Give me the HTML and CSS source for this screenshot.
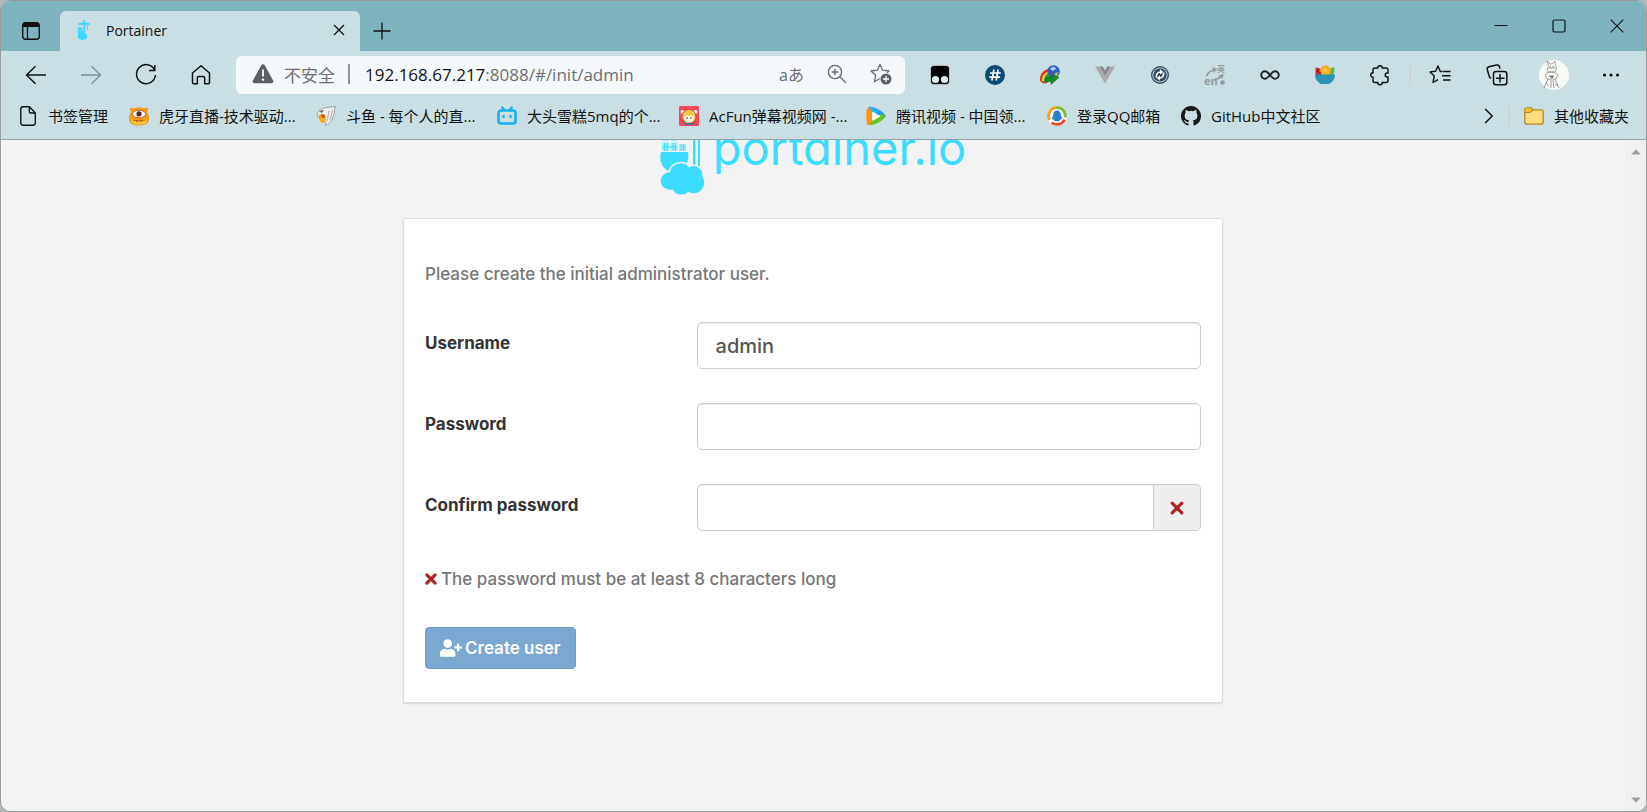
FILE: index.html
```html
<!DOCTYPE html>
<html lang="zh-CN">
<head>
<meta charset="utf-8">
<title>Portainer</title>
<link rel="stylesheet" href="styles.css">
</head>
<body>
<div class="window">
  <header class="chrome">
    <div class="tabbar">
      <button class="tab-actions" aria-label="Tab actions">
        <svg width="20" height="20" viewBox="0 0 20 20"><rect x="1.7" y="1.7" width="16.6" height="16.6" rx="3" fill="none" stroke="#111" stroke-width="1.4"/><path d="M1.5 6V4.5a3 3 0 0 1 3-3h11a3 3 0 0 1 3 3V6z" fill="#111"/><path d="M6.5 6v12" stroke="#111" stroke-width="1.3"/></svg>
      </button>
      <div class="tab">
        <svg width="16" height="20" viewBox="0 0 16 20" fill="#3bd6ff"><path d="M7.5 0h1.6v2.600l5 .9V4.700H9.100V14H7.500V4.700H1.600V3.600l5.900-1zM11 5h.8v5H11zM2 7.500h4.500V10H2zM1.500 10.500h5.500V14h-5zM3.500 13.500a3.500 3.500 0 0 1 5-.2 3.200 3.200 0 0 1 2.500 3.900A3 3 0 0 1 8 19.600a4 4 0 0 1-4.500-.6 2.900 2.900 0 0 1 0-5.500z"/></svg>
        <span class="tab-title">Portainer</span>
        <button class="tab-close" aria-label="Close tab"><svg width="12" height="12" viewBox="0 0 12 12"><path d="M1 1l10 10M11 1L1 11" stroke="#111" stroke-width="1.3"/></svg></button>
      </div>
      <button class="new-tab" aria-label="New tab"><svg width="18" height="18" viewBox="0 0 18 18"><path d="M9 0.500v17M.5 9h17" stroke="#111" stroke-width="1.3"/></svg></button>
      <div class="window-controls">
        <button aria-label="Minimize"><svg width="14" height="14" viewBox="0 0 14 14"><path d="M.5 6.500h13" stroke="#111"/></svg></button>
        <button aria-label="Maximize"><svg width="14" height="14" viewBox="0 0 14 14"><rect x="1" y="1" width="12" height="12" rx="1.500" fill="none" stroke="#111" stroke-width="1.200"/></svg></button>
        <button aria-label="Close"><svg width="14" height="14" viewBox="0 0 14 14"><path d="M.7.7l12.600 12.600M13.300.7L.7 13.300" stroke="#111" stroke-width="1.100"/></svg></button>
      </div>
    </div>

    <div class="toolbar">
      <nav class="nav-buttons">
        <button aria-label="Back"><svg width="22" height="22" viewBox="0 0 22 22" fill="none" stroke="#111" stroke-width="1.400"><path d="M21 11H1.500M10.500 2.200L1.500 11l9 8.800"/></svg></button>
        <button aria-label="Forward"><svg width="22" height="22" viewBox="0 0 22 22" fill="none" stroke="#7f9298" stroke-width="1.400"><path d="M1 11h19.500M11.500 2.200l9 8.800-9 8.800"/></svg></button>
        <button aria-label="Reload"><svg width="22" height="22" viewBox="0 0 22 22" fill="none" stroke="#111" stroke-width="1.500"><path d="M19.600 6A9.500 9.500 0 1 0 20.500 11M19.800 1v5.500H14"/></svg></button>
        <button aria-label="Home"><svg width="22" height="22" viewBox="0 0 22 22" fill="none" stroke="#111" stroke-width="1.500" stroke-linejoin="round"><path d="M2.500 9L11 1.800 19.500 9v9.500a1.200 1.200 0 0 1-1.200 1.200h-3.600V14a1.500 1.500 0 0 0-1.500-1.500H8.800A1.500 1.500 0 0 0 7.300 14v5.700H3.700a1.200 1.200 0 0 1-1.200-1.200z"/></svg></button>
      </nav>
      <div class="address">
        <svg class="warn" width="22" height="20" viewBox="0 0 22 20"><path d="M9.300 1.200a2 2 0 0 1 3.400 0l8.500 15.500a1.700 1.700 0 0 1-1.500 2.500H2.300a1.700 1.700 0 0 1-1.500-2.500z" fill="#5c5f61"/><path d="M11 5.500v7" stroke="#fff" stroke-width="1.800"/><circle cx="11" cy="15.600" r="1.200" fill="#fff"/></svg>
        <span class="insecure">不安全</span>
        <span class="divider"></span>
        <a class="url" href="#/init/admin"><b>192.168.67.217</b>:8088/#/init/admin</a>
        <button class="translate" aria-label="Translate">aあ</button>
        <button aria-label="Zoom"><svg width="20" height="20" viewBox="0 0 20 20" fill="none" stroke="#6a6d6f" stroke-width="1.400"><circle cx="8" cy="8" r="6.600"/><path d="M12.800 12.800l6 6M8 4.800v6.400M4.800 8h6.400"/></svg></button>
        <button aria-label="Add to favourites"><svg width="22" height="22" viewBox="0 0 22 22"><path d="M10 1.500l2.700 5.700 6.300.8-4.600 4.300 1.200 6.100L10 15.500l-5.600 3.300 1.200-6.500L1 8l6.300-.8z" fill="none" stroke="#6a6d6f" stroke-width="1.300" stroke-linejoin="round"/><circle cx="16" cy="16" r="6.400" fill="#f5f9fb"/><circle cx="16" cy="16" r="5.500" fill="#5f6264"/><path d="M16 13v6M13 16h6" stroke="#fff" stroke-width="1.300"/></svg></button>
      </div>
      <div class="extensions">
        <button aria-label="Tampermonkey"><svg width="20" height="20" viewBox="0 0 20 20"><rect x=".5" y=".5" width="19" height="19" rx="3.500" fill="#000" stroke="#eee" stroke-width=".6"/><circle cx="5.500" cy="14.500" r="3.600" fill="#dcecef"/><circle cx="14.500" cy="14.500" r="3.600" fill="#dcecef"/></svg></button>
        <button aria-label="Hash"><svg width="20" height="20" viewBox="0 0 20 20"><circle cx="10" cy="10" r="10" fill="#0b4a72"/><path d="M8.900 4.500L6.900 15.500M13.200 4.500l-2 11M5 8h10.800M4.300 12.200h10.800" stroke="#fff" stroke-width="1.700"/></svg></button>
        <button aria-label="Download manager"><svg width="20" height="20" viewBox="0 0 20 20"><path d="M0 15C0 8 4 4 10 4l1 3-4 11c-3 1-6 0-7-3z" fill="#e33425"/><path d="M2 16c0-6 3-9 8-10l1 3-4 8z" fill="#f4d81f"/><path d="M4 16c0-4 2-7 6-8l2 3-5 7z" fill="#1ea832"/><circle cx="13.500" cy="6.500" r="6.300" fill="#315eb6"/><path d="M10 4c2-3 6-2 6 0l-3 2z" fill="#b4cdf5"/><path d="M14 9l4-2-1 4-3 1z" fill="#d9c83c"/><path d="M6 13l7-1.500V9l6 3.500-8 7v-3L5 17z" fill="#148d26" stroke="#0a5b14" stroke-width=".5"/></svg></button>
        <button aria-label="Vue devtools"><svg width="20" height="20" viewBox="0 0 20 20"><path d="M0 1.500h4.500L10 11l5.500-9.500H20L10 18.500z" fill="#aaa"/><path d="M4.500 1.500h3.300L10 5.500l2.200-4h3.300L10 11z" fill="#888"/></svg></button>
        <button aria-label="Proxy switcher"><svg width="20" height="20" viewBox="0 0 20 20" fill="none"><circle cx="10" cy="10" r="8.300" fill="#e3edf2" stroke="#344e63" stroke-width="1.400"/><circle cx="10" cy="10" r="6.800" fill="#344e63"/><path d="M6.500 12.500C5.800 9.500 7.500 7 10.500 7M13.500 7.500c.7 3-1 5.500-4 5.500" stroke="#fff" stroke-width="1.700"/><path d="M10 4.300l3.300 2.700L10 9.500zM10 10.500L6.700 13l3.300 2.700z" fill="#fff"/></svg></button>
        <button aria-label="Translator"><svg width="22" height="22" viewBox="0 0 22 22" fill="none" stroke="#969ba0" stroke-width="1.800"><path d="M2.500 12C4 9 6 7 9.500 6M10 15.500c4 0 6-1.500 8-4.500"/><path d="M8 3.200l5.500 1.500-3.500 4zM14 12l5.500-2.500-.5 5z" fill="#969ba0" stroke="none"/><circle cx="18.500" cy="18.500" r="2.300" fill="#969ba0" stroke="none"/><text x="0" y="21" font-size="11" font-weight="bold" fill="#969ba0" stroke="none">en</text><text x="13" y="8" font-size="8" font-weight="bold" fill="#969ba0" stroke="none">英</text></svg></button>
        <button aria-label="Infinity"><svg width="20" height="20" viewBox="0 0 20 20"><path d="M10 10C8 7.500 6.800 6.200 5 6.200a3.800 3.800 0 0 0 0 7.600C6.800 13.800 8 12.500 10 10s3.200-3.800 5-3.800a3.800 3.800 0 0 1 0 7.600c-1.800 0-3-1.300-5-3.800z" fill="none" stroke="#1d2326" stroke-width="1.900"/></svg></button>
        <button aria-label="Fruit bowl"><svg width="20" height="20" viewBox="0 0 20 20"><path d="M.5 10V2.500C4 2 8 5 8 10z" fill="#c3343c"/><path d="M12 10c0-4 3-7 7-8 1 3 .5 6-1 8z" fill="#58b847"/><circle cx="10.500" cy="5.500" r="5.300" fill="#f7a81b"/><path d="M10.500 1.500v8M6.500 5.500h8M7.500 2.500l6 6M13.500 2.500l-6 6" stroke="#ffd05c" stroke-width=".7"/><path d="M2.500 5v2M5 7v1" stroke="#401014"/><path d="M0 9.500h20c0 5-3 8-6 9.500H6C3 17.500 0 14.500 0 9.500z" fill="#2c93b4"/></svg></button>
        <button aria-label="Extensions"><svg width="20" height="20" viewBox="0 0 20 20"><path d="M5 3h2.700a2.300 2.300 0 0 1 4.600 0H16a2 2 0 0 1 2 2v3h-.8a2 2 0 0 0 0 4h.8v3.500a2 2 0 0 1-2 2h-3.700a2.300 2.300 0 0 1-4.600 0H5a2 2 0 0 1-2-2v-3.200a2.300 2.300 0 0 1 0-4.600V5a2 2 0 0 1 2-2z" fill="none" stroke="#111" stroke-width="1.400"/></svg></button>
      </div>
      <span class="tool-divider"></span>
      <div class="actions">
        <button aria-label="Favourites"><svg width="22" height="22" viewBox="0 0 22 22" fill="none" stroke="#111" stroke-width="1.400" stroke-linejoin="round"><path d="M13.500 7.500h-2.200L9 2 6.600 7.200l-5.500.7 4.100 4.100-1.200 6.500 5-2.800M14 7.500h7.500M13 11.800h8.500M14 16h7.500"/></svg></button>
        <button aria-label="Collections"><svg width="22" height="22" viewBox="0 0 22 22" fill="none" stroke="#111" stroke-width="1.500"><rect x="7.500" y="7.500" width="13.300" height="13.300" rx="2.500"/><path d="M14 10v8.500M10 14.200h8.500M5.200 14.300A2.500 2.500 0 0 1 3.300 12.500L1.300 5.800a2.500 2.500 0 0 1 1.700-3L10.500 1a2.500 2.500 0 0 1 3 1.800l.5 2"/></svg></button>
        <button aria-label="Profile"><svg width="30" height="30" viewBox="0 0 30 30"><circle cx="15" cy="15" r="15" fill="#f7faf5"/><g fill="none" stroke="#8a8d8a" stroke-width=".8"><path d="M8 1l1.500 5C8 8 8 10 9 12h7c2-2 1-5 .5-7L16 1l-3 3h-2zM9.500 9l2-3 1 3 2-3 1 3"/><path d="M6 15c3-4 10-4 13 0l-2 4H8zM9 19L5 28M16 19l4 9M12 20v8M14 20l1 8M7 23l3 3M16 24l3 2"/><path d="M10 16h5l-2 2z" fill="#444"/></g></svg></button>
        <button aria-label="Settings and more"><svg width="18" height="6" viewBox="0 0 18 6" fill="#111"><circle cx="2.500" cy="3" r="1.600"/><circle cx="9" cy="3" r="1.600"/><circle cx="15.500" cy="3" r="1.600"/></svg></button>
      </div>
    </div>

    <div class="bookmarks">
      <nav class="bookmark-list">
        <a href="#"><svg width="20" height="20" viewBox="0 0 20 20"><path d="M5 .8h6.500L17.300 7v10a2.200 2.200 0 0 1-2.200 2.200H5A2.200 2.200 0 0 1 2.800 17V3A2.200 2.200 0 0 1 5 .8zM11.300 1v4.500A1.500 1.500 0 0 0 12.800 7h4.300" fill="none" stroke="#111" stroke-width="1.400"/></svg><span>书签管理</span></a>
        <a href="#"><svg width="20" height="20" viewBox="0 0 20 20"><path d="M1 3.500C1 1.500 3 1 5 2.500c3-1.500 7-1.500 10 0 2-1.500 4-1 4 1L18 6.500c1.500 1.500 2 3.500 2 6 0 5-4 7-10 7s-10-2-10-7C0 10 .5 8 2 6.500z" fill="#f39a1d"/><path d="M3 8c2-5 12-5 14 0-2 5-12 5-14 0z" fill="#fff" stroke="#a8531c" stroke-width=".8"/><circle cx="10" cy="7.800" r="2.600" fill="#5e2417"/><path d="M2 13c5 2 11 2 16 0l-1 4c-4 2-10 2-14 0z" fill="#ffc73a"/><path d="M4 14.500h12M7 14.500l1 1.500 1-1.500M11 14.500l1 1.500 1-1.500" fill="none" stroke="#b45912" stroke-width=".8"/></svg><span>虎牙直播-技术驱动...</span></a>
        <a href="#"><svg width="20" height="20" viewBox="0 0 20 20"><path d="M1 8C3 3 7 2 11 1.500L19.500.5c-2 3 0 5-2 9.500-1 4-4 8-8 9.500 1-2.500 0-4-2-5.500C4 13 1 11 1 8z" fill="#ededed" stroke="#888" stroke-width=".7"/><path d="M3 9c2-2 6-1 7 2 0 3-1 6-4 6-2-1-4-5-3-8z" fill="#f4a91b"/><circle cx="7" cy="10" r="1.800" fill="#c9472a"/><path d="M3 5l5-1-2 3z" fill="#666"/><path d="M13 5c-1 4-1 7-2 10M16.500 4c-1 3-1 7-3 10" stroke="#aaa" fill="none"/></svg><span>斗鱼 - 每个人的直...</span></a>
        <a href="#"><svg width="20" height="20" viewBox="0 0 20 20"><rect x="1.500" y="4.500" width="17" height="13" rx="2.500" fill="none" stroke="#16b0ef" stroke-width="2.600"/><path d="M4.500.8l3 3M15.500.8l-3 3M6.500 9v3M13.500 9v3" stroke="#16b0ef" stroke-width="2.200"/></svg><span>大头雪糕5mq的个...</span></a>
        <a href="#"><svg width="20" height="20" viewBox="0 0 20 20"><rect width="20" height="20" rx="1" fill="#f9465a"/><circle cx="3.500" cy="6" r="2" fill="#fff"/><circle cx="16.500" cy="6" r="2" fill="#fff"/><circle cx="10" cy="10.500" r="7" fill="#fbc449" stroke="#a34b2e" stroke-width=".8"/><path d="M5 11l3-2 2 1 2-1 3 2c0 4-2 5.500-5 5.500S5 15 5 11z" fill="#fff5e6"/><path d="M7 12h2M11 12h2" stroke="#6b3b2a"/><path d="M4 17h12l-2 2H6z" fill="#5a6a98"/></svg><span>AcFun弹幕视频网 -...</span></a>
        <a href="#"><svg width="20" height="20" viewBox="0 0 20 20"><path d="M2 1C6-1 19 6 19.800 10L10 16 6 4z" fill="#1e9df2"/><path d="M1 3C0 6 0 14 1 18c1 2 3 1 5 0V3C4 1 2 1 1 3z" fill="#ff9213"/><path d="M4 19c4 1 14-5 16-9l-6-2-9 7z" fill="#66c523"/><path d="M3 2C5 1 9 3 12 5l-3 4z" fill="#25b6f4"/><path d="M6.500 5.500l8 4.700-8 4.700z" fill="#fff"/></svg><span>腾讯视频 - 中国领...</span></a>
        <a href="#"><svg width="20" height="20" viewBox="0 0 20 20"><circle cx="10" cy="10" r="9.800" fill="#fff"/><g fill="none" stroke-width="2.800"><path d="M2.500 14A8.500 8.500 0 0 1 9 1.600" stroke="#f7a31a"/><path d="M9 1.600a8.500 8.500 0 0 1 9.300 10" stroke="#76bf3a"/><path d="M17.600 13.500A8.500 8.500 0 0 1 4.500 16.500" stroke="#f0492d"/></g><path d="M10 4.500c-3 0-3.800 2.500-3.800 5L4.500 13l2 .3c0 1.500 1.500 2 3.500 2s3.500-.5 3.500-2l2-.3-1.700-3.500c0-2.500-.8-5-3.800-5z" fill="#2581c9"/></svg><span>登录QQ邮箱</span></a>
        <a href="#"><svg width="20" height="20" viewBox="0 0 16 16"><path fill="#191717" d="M8 0C3.580 0 0 3.580 0 8c0 3.540 2.290 6.530 5.470 7.590.4.070.55-.17.55-.38 0-.19-.01-.82-.01-1.490-2.010.37-2.530-.49-2.690-.94-.09-.23-.48-.94-.82-1.130-.28-.15-.68-.52-.01-.53.63-.01 1.080.58 1.230.82.72 1.210 1.870.87 2.330.66.070-.52.28-.87.51-1.070-1.780-.2-3.640-.89-3.640-3.950 0-.87.31-1.590.82-2.150-.08-.2-.36-1.020.08-2.120 0 0 .67-.21 2.200.82a7.600 7.600 0 0 1 4 0c1.530-1.040 2.200-.82 2.200-.82.44 1.100.16 1.920.08 2.120.51.56.82 1.270.82 2.150 0 3.070-1.870 3.750-3.650 3.950.29.25.54.73.54 1.480 0 1.070-.01 1.930-.01 2.200 0 .21.15.46.55.38A8.010 8.010 0 0 0 16 8c0-4.420-3.580-8-8-8z"/></svg><span>GitHub中文社区</span></a>
      </nav>
      <div class="bookmark-end">
        <button aria-label="More bookmarks"><svg width="10" height="16" viewBox="0 0 10 16"><path d="M1.200 1l7 7-7 7" fill="none" stroke="#111" stroke-width="1.500"/></svg></button>
        <span class="bookmark-divider"></span>
        <a href="#"><svg width="20" height="18" viewBox="0 0 20 18"><path d="M.8 3A2.200 2.200 0 0 1 3 .8h4l2 2h8A2.200 2.200 0 0 1 19.200 5v10a2.200 2.200 0 0 1-2.200 2.200H3A2.200 2.200 0 0 1 .8 15z" fill="#ffdb7d" stroke="#b48a20" stroke-width="1.300"/><path d="M1.400 5.200V3A1.600 1.600 0 0 1 3 1.400h3.800l1.400 1.400-2 2.400z" fill="#f5bf2c"/><path d="M1 5.500h5.200l2.600-2.700" fill="none" stroke="#b48a20" stroke-width="1.200"/></svg><span>其他收藏夹</span></a>
      </div>
    </div>
  </header>

  <div class="viewport">
    <main class="page">
      <div class="logo">
        <svg width="46" height="56" viewBox="0 0 46 56" fill="#3bdcff"><path d="M33 0h2.500v26H33zM38 0h2v26h-2z"/><path d="M2 0h7v1H2zM11 0h6v1h-6zM2 2.500h7.500V11H2zM10.500 2.500h7V11h-7zM19 4h7v7h-7z" fill="#a4ebfa"/><path d="M4.500 3v8M7 3v8M13 3v8M15.500 3v8M21.200 4v7M23.700 4v7M2 7h15.500" stroke="#3bdcff"/><path d="M1 12h27c1 6 0 11-4 16l-17 2.500C1 26-1 19 1 12z"/><path d="M9.500 31.500c1.500-9 14-12 19.500-5 7-3.500 15 2 14 9.500 4.500 7 .5 17-8.500 18-2.500 0-4.500-.5-6-1.500-4 4-13 4-16-2C5.500 51 0 47 0 41c0-5.500 4.500-9.500 9.500-9.500z" stroke="#f3f3f3" stroke-width="1.500"/></svg>
        <span class="wordmark">portainer.io</span>
      </div>
      <form class="card">
        <p class="hint">Please create the initial administrator user.</p>
        <div class="field"><label for="username">Username</label><input id="username" type="text" value="admin"></div>
        <div class="field"><label for="password">Password</label><input id="password" type="password"></div>
        <div class="field"><label for="confirm">Confirm password</label>
          <div class="group"><input id="confirm" type="password"><span class="addon"><svg width="14" height="14" viewBox="0 0 14 14"><path d="M2.200 2.200l9.600 9.600M11.800 2.200l-9.600 9.600" stroke="#ae2323" stroke-width="3.200" stroke-linecap="round"/></svg></span></div>
        </div>
        <p class="rule"><svg width="12" height="12" viewBox="0 0 12 12"><path d="M1.800 1.800l8.400 8.400M10.200 1.800l-8.400 8.400" stroke="#ae2323" stroke-width="3.100" stroke-linecap="round"/></svg>The password must be at least 8 characters long</p>
        <button class="submit" type="button"><svg width="22" height="18" viewBox="0 0 640 512"><path fill="#fff" d="M624 208h-64v-64c0-8.800-7.200-16-16-16h-32c-8.800 0-16 7.200-16 16v64h-64c-8.800 0-16 7.200-16 16v32c0 8.800 7.200 16 16 16h64v64c0 8.800 7.200 16 16 16h32c8.800 0 16-7.200 16-16v-64h64c8.800 0 16-7.200 16-16v-32c0-8.800-7.200-16-16-16zm-400 48c70.700 0 128-57.300 128-128S294.700 0 224 0 96 57.300 96 128s57.300 128 128 128zm89.600 32h-16.700c-22.200 10.200-46.900 16-72.900 16s-50.600-5.800-72.900-16h-16.700C60.200 288 0 348.200 0 422.400V464c0 26.500 21.500 48 48 48h352c26.500 0 48-21.500 48-48v-41.600c0-74.200-60.200-134.400-134.400-134.400z"/></svg>Create user</button>
      </form>
    </main>
    <div class="scrollbar">
      <svg width="10" height="6" viewBox="0 0 10 6"><path d="M0 5.500L5 .5l5 5z" fill="#a0a0a0"/></svg>
      <svg width="10" height="6" viewBox="0 0 10 6"><path d="M0 .5h10l-5 5z" fill="#a0a0a0"/></svg>
    </div>
  </div>
</div>
</body>
</html>
```
FILE: styles.css
```css
* { box-sizing: border-box; }

body {
  margin: 0;
  background: #b4b8b6;
  font-family: "Open Sans", "Noto Sans CJK SC", sans-serif;
  color: #111;
}

button {
  display: flex;
  align-items: center;
  justify-content: center;
  padding: 0;
  border: 0;
  background: none;
  font: inherit;
  color: inherit;
}

a { color: inherit; text-decoration: none; }
svg { display: block; flex: none; overflow: visible; }

.window {
  display: flex;
  flex-direction: column;
  min-height: 100vh;
  border: 1px solid #999c9c;
  border-radius: 10px;
  overflow: hidden;
  background: #f3f3f3;
}

.chrome {
  background: #c9dfe3;
  border-bottom: 1px solid #94a5ab;
}

/* Tab strip */
.tabbar {
  display: flex;
  align-items: flex-end;
  height: 50px;
  background: #7eb4be;
}

.tab-actions { width: 59px; height: 40px; }

.tab {
  display: flex;
  align-items: center;
  width: 300px;
  height: 40px;
  padding: 0 15px 2px 16px;
  border-radius: 6px 6px 0 0;
  background: #c9dfe3;
}

.tab-title {
  flex: 1;
  margin-left: 14px;
  font-size: 14px;
}

.new-tab { width: 44px; height: 40px; }

.window-controls {
  display: flex;
  align-self: stretch;
  margin-left: auto;
}

.window-controls button { width: 58px; }

/* Navigation and address bar */
.toolbar {
  display: flex;
  align-items: center;
  height: 48px;
  padding: 0 7px;
}

.nav-buttons, .extensions, .actions { display: flex; align-items: center; }
.nav-buttons button, .extensions button { width: 55px; height: 38px; }
.actions button { width: 57px; height: 38px; }

.address {
  display: flex;
  flex: 1;
  align-items: center;
  height: 38px;
  margin: 0 7px 0 8px;
  padding: 0 13px 2px 16px;
  border-radius: 6px;
  background: #f5f9fb;
  font-size: 17px;
  color: #6c6f71;
}

.insecure { margin-left: 10px; }

.divider {
  width: 2px;
  height: 20px;
  margin: 0 15px 0 13px;
  background: #909395;
}

.url { flex: 1; white-space: nowrap; }
.url b { font-weight: 400; color: #111; }
.address button { margin-left: 23px; }
.translate { font-size: 16px; }

.tool-divider, .bookmark-divider {
  width: 2px;
  height: 20px;
  background: #cfd2d6;
}

.tool-divider { margin-left: 2px; }

/* Bookmarks */
.bookmarks {
  display: flex;
  align-items: center;
  justify-content: space-between;
  height: 40px;
  padding: 0 17px 6px;
  font-size: 15px;
  line-height: 24px;
  white-space: nowrap;
}

.bookmark-list {
  display: grid;
  grid-template-columns: 111px 187px 181px 182px 187px 181px 134px auto;
}

.bookmarks a { display: flex; align-items: center; gap: 10px; }
.bookmark-end { display: flex; align-items: center; gap: 14px; }

/* Page */
.viewport { display: flex; flex: 1; }

.page {
  flex: 1;
  display: flex;
  flex-direction: column;
  align-items: center;
  font-family: Inter, sans-serif;
}

.logo {
  display: flex;
  align-items: flex-end;
  gap: 7px;
  height: 78px;
  padding-bottom: 22px;
  overflow: hidden;
}

.wordmark {
  margin-bottom: 28px;
  font-size: 47px;
  line-height: 40px;
  color: #3bdcff;
  font-feature-settings: "cv11", "ss03";
}

.card {
  width: 100%;
  max-width: 820px;
  padding: 41px 21px 33px;
  border: 1px solid #dcdcdc;
  border-radius: 2px;
  background: #fff;
  box-shadow: 0 1px 2px rgba(0, 0, 0, 0.1);
}

.hint, .rule {
  margin: 0;
  font-size: 17px;
  font-weight: 500;
  line-height: 28px;
  color: #767676;
}

.hint { margin-bottom: 34px; }

.field {
  display: grid;
  grid-template-columns: 35% 1fr;
  margin-bottom: 34px;
}

.field label {
  padding-top: 8px;
  font-size: 17px;
  font-weight: 700;
  line-height: 26px;
  color: #333;
}

.field input {
  width: 100%;
  height: 47px;
  padding: 0 18px;
  border: 1px solid #ccc;
  border-radius: 5px;
  background: #fff;
  box-shadow: inset 0 1px 1px rgba(0, 0, 0, 0.08);
  font: 500 20px Inter, sans-serif;
  color: #555;
}

.field .group { display: flex; }
.field .group input { border-radius: 5px 0 0 5px; }

.addon {
  display: flex;
  flex: none;
  align-items: center;
  justify-content: center;
  width: 47px;
  border: 1px solid #ccc;
  border-left: 0;
  border-radius: 0 5px 5px 0;
  background: #eee;
}

.rule {
  display: flex;
  align-items: center;
  gap: 4px;
  margin-bottom: 34px;
}

.submit {
  height: 42px;
  gap: 3px;
  padding: 0 14px;
  border: 1px solid #739fc7;
  border-radius: 4px;
  background: #7ba8d0;
  font-size: 17px;
  font-weight: 600;
  color: #fff;
}

.scrollbar {
  display: flex;
  flex-direction: column;
  align-items: center;
  justify-content: space-between;
  width: 21px;
  padding: 9px 0 8px;
  background: #f0f0f0;
}
```
